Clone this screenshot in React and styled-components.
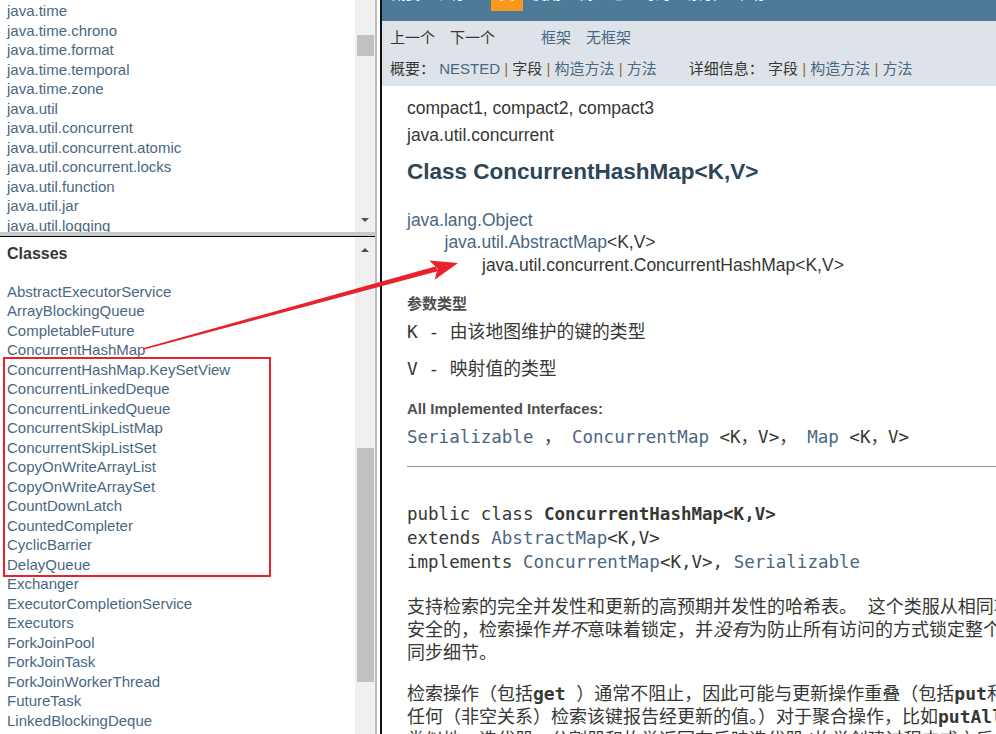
import React from 'react';
import styled, { createGlobalStyle } from 'styled-components';

const Global = createGlobalStyle`
  html, body { margin: 0; padding: 0; background: #fff; }
  body { font-family: "Liberation Sans", Arial, "Noto Sans CJK SC", sans-serif; }
  * { box-sizing: border-box; }
`;

const SANS = `"Liberation Sans", Arial, "Noto Sans CJK SC", sans-serif`;
const MONO = `"DejaVu Sans Mono", "Noto Sans CJK SC", monospace`;
const LINK = '#4A6782';
const TEXT = '#353833';

const Page = styled.div`
  position: relative;
  width: 996px;
  height: 734px;
  overflow: hidden;
  display: flex;
  background: #fff;
`;

/* ---------- left frames ---------- */
const LeftColumn = styled.div`
  width: 375px;
  flex: none;
  display: flex;
  flex-direction: column;
`;

const Frame = styled.div`
  display: flex;
  flex: ${(p) => (p.$height ? 'none' : '1')};
  height: ${(p) => (p.$height ? `${p.$height}px` : 'auto')};
  min-height: 0;
  background: #fff;
`;

const FrameBody = styled.div`
  flex: 1;
  min-width: 0;
  overflow: hidden;
  padding-top: ${(p) => p.$padTop || 0}px;
`;

const HSplit = styled.div`
  flex: none;
  height: 5px;
  background: #c9c9c9;
  border-bottom: 1px solid #000;
`;

const VSplit = styled.div`
  flex: none;
  width: 5px;
  border-left: 2px solid #bdbdbd;
  background: #fff;
`;

const Scrollbar = styled.div`
  width: 20px;
  flex: none;
  background: #f0f0f0;
  display: flex;
  flex-direction: column;
`;

const ScrollArrow = styled.div`
  flex: none;
  height: 17px;
  display: flex;
  align-items: center;
  justify-content: center;
  margin-top: ${(p) => p.$mt || 0}px;
  margin-bottom: ${(p) => p.$mb || 0}px;
  &::after {
    content: '';
    width: 0;
    height: 0;
    border-left: 4px solid transparent;
    border-right: 4px solid transparent;
    ${(p) =>
      p.$dir === 'down'
        ? 'border-top: 4px solid #505050;'
        : 'border-bottom: 4px solid #505050;'}
  }
`;

const ScrollTrack = styled.div`
  flex: 1;
  min-height: 0;
  overflow: hidden;
`;

const Thumb = styled.div`
  width: 17px;
  margin-left: 2px;
  margin-top: ${(p) => p.$top}px;
  height: ${(p) => p.$h}px;
  background: #c1c1c1;
`;

const ListLink = styled.a`
  display: block;
  color: ${LINK};
  text-decoration: none;
  font-family: ${SANS};
  font-size: 15px;
  line-height: 19.5px;
  white-space: nowrap;
  padding-left: 7px;
`;

const Heading = styled.h2`
  margin: 0 0 17.75px 0;
  padding-left: 7px;
  font-family: ${SANS};
  font-size: 16px;
  line-height: 20px;
  font-weight: bold;
  color: ${TEXT};
`;

const Highlight = styled.div`
  margin-left: 6px;
  width: 262px;
  outline: 2px solid #e8212a;
  outline-offset: 1px;
  & > ${ListLink} {
    padding-left: 1px;
  }
`;

/* ---------- right frame ---------- */
const RightFrame = styled.div`
  flex: none;
  width: 1400px;
  border-left: 2px solid #111;
  display: flex;
  flex-direction: column;
`;

const TopNav = styled.div`
  flex: none;
  height: 21px;
  background: #4d7a97;
  display: flex;
  align-items: flex-start;
  overflow: hidden;
`;

const NavItem = styled.div`
  margin-top: -15px;
  padding: 0 8.5px 10.5px;
  font-family: "Noto Sans CJK SC", sans-serif;
  font-size: 15px;
  line-height: 15px;
  color: #fff;
  background: ${(p) => (p.$active ? '#f8981d' : 'transparent')};
`;

const SubNav = styled.div`
  flex: none;
  height: 65px;
  background: #dee3e9;
  padding: 7px 0 0 8px;
  font-family: ${SANS};
  font-size: 15px;
  color: ${TEXT};
`;

const SubRow = styled.div`
  display: flex;
  align-items: center;
  height: 20px;
  line-height: 20px;
  white-space: nowrap;
  & + & {
    margin-top: 11px;
  }
`;

const SubItem = styled.span`
  color: ${(p) => (p.$link ? LINK : TEXT)};
  margin-right: ${(p) => p.$gap || 0}px;
`;

const Sep = styled.span`
  color: #8b6d45;
`;

const Content = styled.div`
  padding: 12px 0 0 25px;
  color: ${TEXT};
  font-family: ${SANS};
`;

const SubTitle = styled.div`
  font-size: 17.5px;
  line-height: 20px;
  margin-top: ${(p) => p.$mt || 0}px;
`;

const Title = styled.h2`
  margin: 14px 0 0 0;
  font-size: 22.5px;
  line-height: 26px;
  font-weight: bold;
  color: #2c4557;
`;

const Inherit = styled.div`
  font-size: 17.5px;
  line-height: 22.5px;
  padding-left: ${(p) => p.$level * 37.5}px;
  margin-top: ${(p) => p.$mt || 0}px;
  white-space: nowrap;
`;

const A = styled.a`
  color: ${LINK};
  text-decoration: none;
`;

const DT = styled.div`
  font-size: 15px;
  line-height: 18px;
  font-weight: bold;
  color: #4e4e4e;
  margin-top: ${(p) => p.$mt}px;
`;

const DD = styled.div`
  font-family: ${MONO};
  font-size: ${(p) => p.$size || 17.5}px;
  line-height: 22px;
  margin-top: ${(p) => p.$mt}px;
  white-space: nowrap;
`;

const Rule = styled.hr`
  border: none;
  border-top: 1px solid #9b9b9b;
  margin: 18px 0 0 0;
  height: 0;
`;

const Code = styled.pre`
  margin: 35px 0 0 0;
  font-family: ${MONO};
  font-size: 17.5px;
  line-height: 24px;
  color: ${TEXT};
`;

const Strong = styled.b`
  font-weight: bold;
`;

const Para = styled.p`
  margin: ${(p) => p.$mt}px 0 0 0;
  font-family: ${MONO};
  font-size: 18px;
  line-height: 23px;
  white-space: nowrap;
  color: ${TEXT};
  & em {
    font-style: italic;
  }
  & code {
    font-family: ${MONO};
    font-weight: bold;
  }
`;

const Overlay = styled.svg`
  position: absolute;
  left: 0;
  top: 0;
  pointer-events: none;
`;

const packages = [
  'java.time',
  'java.time.chrono',
  'java.time.format',
  'java.time.temporal',
  'java.time.zone',
  'java.util',
  'java.util.concurrent',
  'java.util.concurrent.atomic',
  'java.util.concurrent.locks',
  'java.util.function',
  'java.util.jar',
  'java.util.logging',
  'java.util.prefs',
];

const before = [
  'AbstractExecutorService',
  'ArrayBlockingQueue',
  'CompletableFuture',
  'ConcurrentHashMap',
];
const boxed = [
  'ConcurrentHashMap.KeySetView',
  'ConcurrentLinkedDeque',
  'ConcurrentLinkedQueue',
  'ConcurrentSkipListMap',
  'ConcurrentSkipListSet',
  'CopyOnWriteArrayList',
  'CopyOnWriteArraySet',
  'CountDownLatch',
  'CountedCompleter',
  'CyclicBarrier',
  'DelayQueue',
];
const after = [
  'Exchanger',
  'ExecutorCompletionService',
  'Executors',
  'ForkJoinPool',
  'ForkJoinTask',
  'ForkJoinWorkerThread',
  'FutureTask',
  'LinkedBlockingDeque',
  'LinkedBlockingQueue',
  'LinkedTransferQueue',
];

const navItems = ['概要', '程序包', '类', '使用', '树', '已过时的', '索引', '帮助'];

function Arrow() {
  // tail near "ConcurrentHashMap", tip near the class hierarchy
  const T = [143, 349];
  const P = [458, 263];
  const dx = P[0] - T[0];
  const dy = P[1] - T[1];
  const len = Math.hypot(dx, dy);
  const u = [dx / len, dy / len];
  const n = [-u[1], u[0]];
  const headLen = 24;
  const headHalf = 10;
  const B = [P[0] - headLen * u[0], P[1] - headLen * u[1]];
  const pt = (p, k, w) =>
    `${(p[0] + n[0] * w + u[0] * k).toFixed(1)},${(p[1] + n[1] * w + u[1] * k).toFixed(1)}`;
  const shaft = [pt(T, 0, 0.8), pt(B, 2, 2.6), pt(B, 2, -2.6), pt(T, 0, -0.8)].join(' ');
  const head = [pt(P, 0, 0), pt(B, -3, headHalf), pt(B, 3, 0), pt(B, -3, -headHalf)].join(' ');
  return (
    <Overlay width="996" height="734" viewBox="0 0 996 734">
      <polygon points={shaft} fill="#e8212a" />
      <polygon points={head} fill="#e8212a" />
    </Overlay>
  );
}

export default function App() {
  return (
    <>
      <Global />
      <Page>
        <LeftColumn>
          <Frame $height={232}>
            <FrameBody $padTop={1.25}>
              {packages.map((p) => (
                <ListLink key={p}>{p}</ListLink>
              ))}
            </FrameBody>
            <Scrollbar>
              <ScrollTrack>
                <Thumb $top={35} $h={21} />
              </ScrollTrack>
              <ScrollArrow $dir="down" $mb={3.5} />
            </Scrollbar>
          </Frame>
          <HSplit />
          <Frame>
            <FrameBody $padTop={7}>
              <Heading>Classes</Heading>
              {before.map((c) => (
                <ListLink key={c}>{c}</ListLink>
              ))}
              <Highlight>
                {boxed.map((c) => (
                  <ListLink key={c}>{c}</ListLink>
                ))}
              </Highlight>
              {after.map((c) => (
                <ListLink key={c}>{c}</ListLink>
              ))}
            </FrameBody>
            <Scrollbar>
              <ScrollArrow $dir="up" $mt={4} />
              <ScrollTrack>
                <Thumb $top={190} $h={234} />
              </ScrollTrack>
            </Scrollbar>
          </Frame>
        </LeftColumn>
        <VSplit />
        <RightFrame>
          <TopNav>
            {navItems.map((n) => (
              <NavItem key={n} $active={n === '类'}>
                {n}
              </NavItem>
            ))}
          </TopNav>
          <SubNav>
            <SubRow>
              <SubItem $gap={15}>上一个</SubItem>
              <SubItem $gap={46}>下一个</SubItem>
              <SubItem $link $gap={15}>框架</SubItem>
              <SubItem $link>无框架</SubItem>
            </SubRow>
            <SubRow>
              <SubItem $gap={32}>
                概要：&nbsp;<A>NESTED</A> <Sep>|</Sep> 字段 <Sep>|</Sep> <A>构造方法</A>{' '}
                <Sep>|</Sep> <A>方法</A>
              </SubItem>
              <SubItem>
                详细信息：&nbsp;字段 <Sep>|</Sep> <A>构造方法</A> <Sep>|</Sep> <A>方法</A>
              </SubItem>
            </SubRow>
          </SubNav>
          <Content>
            <SubTitle>compact1, compact2, compact3</SubTitle>
            <SubTitle $mt={7}>java.util.concurrent</SubTitle>
            <Title>Class ConcurrentHashMap&lt;K,V&gt;</Title>
            <Inherit $level={0} $mt={23.75}>
              <A>java.lang.Object</A>
            </Inherit>
            <Inherit $level={1}>
              <A>java.util.AbstractMap</A>&lt;K,V&gt;
            </Inherit>
            <Inherit $level={2}>java.util.concurrent.ConcurrentHashMap&lt;K,V&gt;</Inherit>
            <DT $mt={18.75}>参数类型</DT>
            <DD $mt={8} $size={17.8}>K - 由该地图维护的键的类型</DD>
            <DD $mt={15} $size={17.8}>V - 映射值的类型</DD>
            <DT $mt={20}>All Implemented Interfaces:</DT>
            <DD $mt={8}>
              <A>Serializable</A> ， <A>ConcurrentMap</A> &lt;K，V&gt;， <A>Map</A> &lt;K，V&gt;
            </DD>
            <Rule />
            <Code>
              public class <Strong>ConcurrentHashMap&lt;K,V&gt;</Strong>
              {'\n'}extends <A>AbstractMap</A>&lt;K,V&gt;
              {'\n'}implements <A>ConcurrentMap</A>&lt;K,V&gt;, <A>Serializable</A>
            </Code>
            <Para $mt={20.5}>
              支持检索的完全并发性和更新的高预期并发性的哈希表。 这个类服从相同功能规范如Hashtable ，并且包括对应于每个方法的方法版本Hashtable 。 不过，尽管所有操作都是线程
              <br />
              安全的，检索操作<em>并不</em>意味着锁定，并<em>没有</em>为防止所有访问的方式锁定整个表的任何支持。 这个类可以在依赖于线程安全性的程序中与Hashtable完全互操作，但不依赖于其
              <br />
              同步细节。
            </Para>
            <Para $mt={18}>
              检索操作（包括<code>get</code> ）通常不阻止，因此可能与更新操作重叠（包括<code>put</code>和<code>remove</code> ）。 检索反映了最近<em>完成的</em>更新操作的结果。 （更正式地，对于给定密钥的更新操作熊之前发生与
              <br />
              任何（非空关系）检索该键报告经更新的值。）对于聚合操作，比如<code>putAll</code>和<code>clear</code> ，并发检索可能反映插入或移除只有一些条目。
              <br />
              类似地，迭代器，分割器和枚举返回在反映迭代器/枚举创建过程中或之后反映哈希表状态的元素。
            </Para>
          </Content>
        </RightFrame>
        <Arrow />
      </Page>
    </>
  );
}
